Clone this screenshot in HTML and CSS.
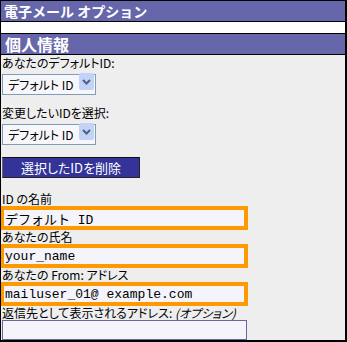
FILE: index.html
```html
<!DOCTYPE html>
<html lang="ja">

<head>
    <meta charset="UTF-8">
    <meta name="viewport" content="width=device-width, initial-scale=1.0">
    <title>電子メール オプション</title>
    <link rel="stylesheet" href="styles.css">
</head>

<body>
    <div class="ventana">
        <div class="titulo">電子メール オプション</div>
        <div class="franja"></div>
        <div class="seccion">個人情報</div>

        <form class="campos">
            <label class="etiqueta alta">あなたのデフォルトID:</label>
            <div class="combo">
                <select>
                    <option>デフォルト ID</option>
                </select>
                <span class="flecha">
                    <svg width="15" height="17" viewBox="0 0 15 17">
                        <path d="M4 7 L7.5 10.5 L11 7" fill="none" stroke="#4d6185" stroke-width="2" />
                    </svg>
                </span>
            </div>

            <label class="etiqueta alta separada">変更したいIDを選択:</label>
            <div class="combo">
                <select>
                    <option>デフォルト ID</option>
                </select>
                <span class="flecha">
                    <svg width="15" height="17" viewBox="0 0 15 17">
                        <path d="M4 7 L7.5 10.5 L11 7" fill="none" stroke="#4d6185" stroke-width="2" />
                    </svg>
                </span>
            </div>

            <button type="button" class="borrar">選択したIDを削除</button>

            <label class="etiqueta primera">ID の名前</label>
            <input type="text" class="marcado" value="デフォルト ID">

            <label class="etiqueta">あなたの氏名</label>
            <input type="text" class="marcado" value="your_name">

            <label class="etiqueta">あなたの From: アドレス</label>
            <input type="text" class="marcado" value="mailuser_01@ example.com">

            <label class="etiqueta">返信先として表示されるアドレス: <em>(オプション)</em></label>
            <input type="text" class="normal">
        </form>
    </div>
</body>

</html>
```

FILE: styles.css
```css
* {
    box-sizing: border-box;
    margin: 0;
    padding: 0;
    font-family: "Noto Sans CJK JP", sans-serif;
    font-feature-settings: "palt";
}

body {
    background-color: #eeeeee;
}

.ventana {
    width: 347px;
    height: 342px;
    background-color: #eeeeee;
    border: 1px solid #000;
    border-right-width: 2px;
    border-bottom-width: 2px;
    overflow: hidden;
}

.titulo,
.seccion {
    height: 21px;
    background-color: #6666aa;
    color: #fff;
    font-weight: bold;
    border-bottom: 1px solid #000;
    white-space: nowrap;
    font-feature-settings: normal;
}

.titulo {
    font-size: 14px;
    line-height: 20px;
    padding-left: 3px;
}

.franja {
    height: 12px;
    background-color: #fff;
    border-bottom: 1px solid #000;
}

.seccion {
    font-size: 16px;
    line-height: 21px;
    padding-left: 4px;
}

.campos {
    display: flex;
    flex-direction: column;
    align-items: flex-start;
    padding-left: 1px;
}

.etiqueta {
    font-size: 12px;
    line-height: 14px;
    height: 14px;
    color: #000;
    white-space: nowrap;
}

.etiqueta em {
    font-style: italic;
}

.alta {
    line-height: 16px;
    height: 16px;
}

.separada {
    margin-top: 13px;
}

.combo {
    position: relative;
    width: 94px;
    height: 21px;
}

.combo select {
    appearance: none;
    width: 100%;
    height: 100%;
    border: 1px solid #7f9db9;
    background-color: #f7f7fb;
    font-size: 12px;
    padding-left: 5px;
    color: #000;
    outline: none;
}

.flecha {
    position: absolute;
    top: 2px;
    right: 2px;
    width: 15px;
    height: 17px;
    background-color: #c3d3f8;
    border-radius: 2px;
    display: flex;
}

.borrar {
    margin-top: 15px;
    width: 138px;
    height: 21px;
    background-color: #333399;
    color: #fff;
    font-size: 13px;
    border: 1px solid #222;
    border-left-color: #666;
    border-top-color: #111;
}

.primera {
    margin-top: 14px;
}

.marcado {
    width: 248px;
    height: 24px;
    margin-left: -2px;
    border: 4px solid #ff9900;
    background-color: #f4f4fa;
    font-family: "Liberation Mono", "Noto Sans CJK JP", monospace;
    font-feature-settings: normal;
    font-size: 13px;
    padding-left: 1px;
    color: #000;
    outline: none;
}

.normal {
    width: 245px;
    height: 20px;
    border: 1px solid #6666a0;
    background-color: #f4f4fa;
    outline: none;
}
```
